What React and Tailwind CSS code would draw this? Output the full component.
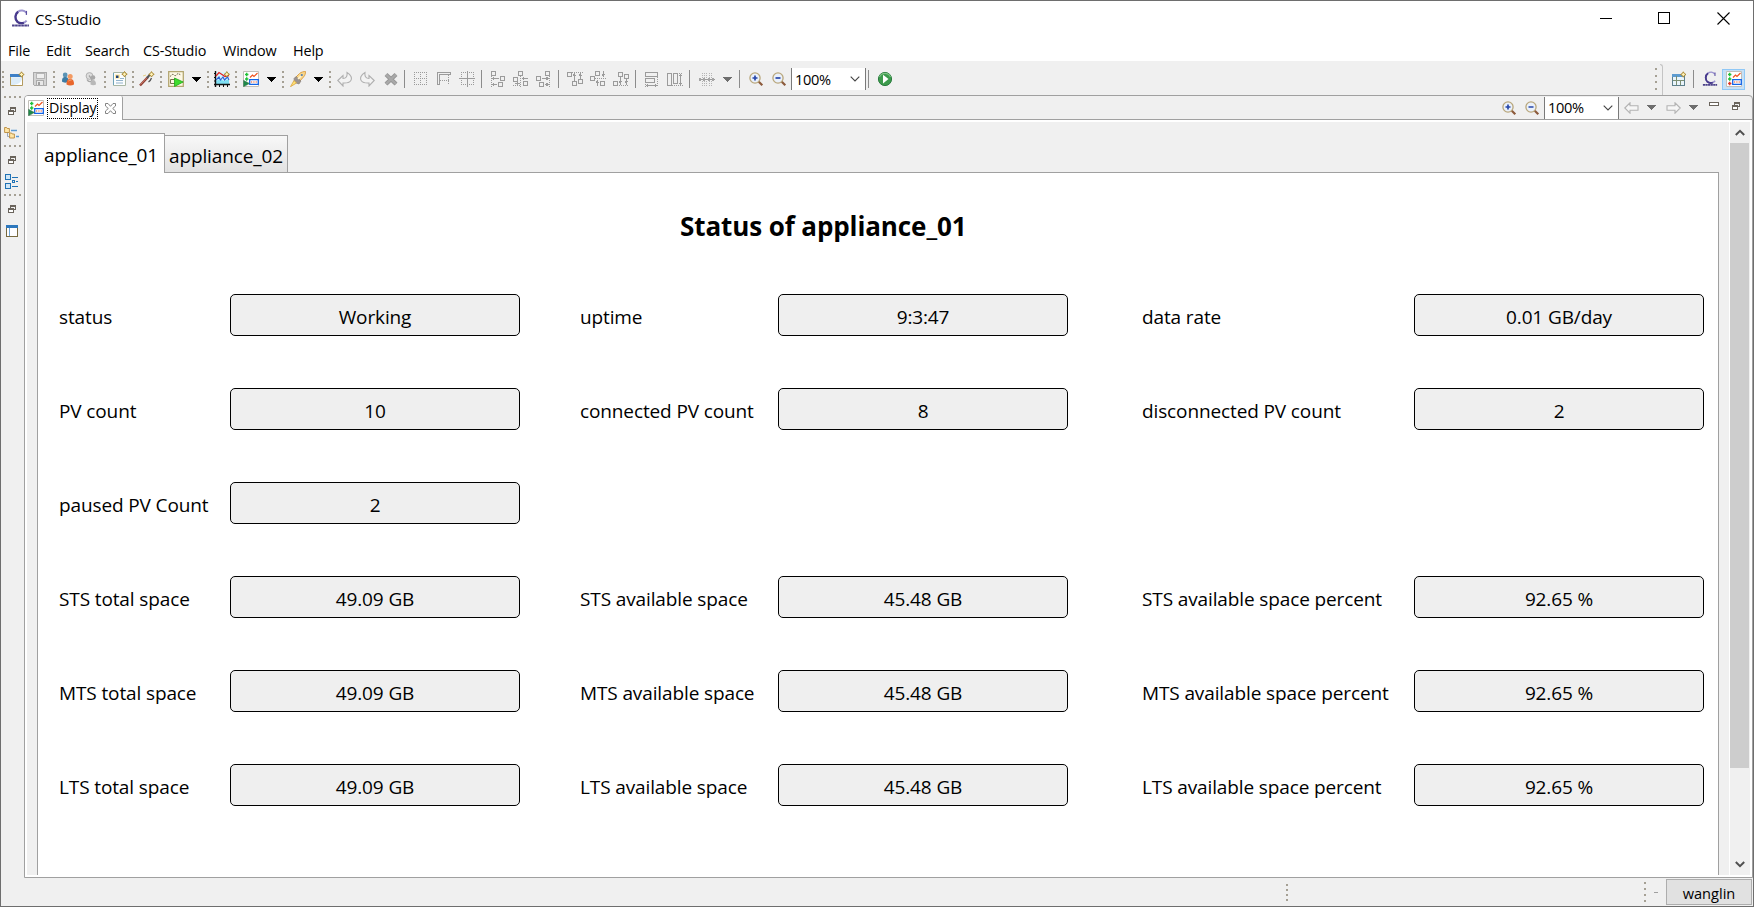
import React from "react";

/* ---------- small building blocks ---------- */

function Svg({ className = "", w = 16, h = 16, crisp = false, children }) {
  return (
    <svg
      className={`shrink-0 block ${className}`}
      width={w}
      height={h}
      viewBox={`0 0 ${w} ${h}`}
      fill="none"
      shapeRendering={crisp ? "crispEdges" : "auto"}
    >
      {children}
    </svg>
  );
}

function Grip({ className = "", h = 17 }) {
  return (
    <Svg className={className} w={2} h={h} crisp>
      {[0, 1, 2, 3].map((i) => (
        <rect key={i} x="0" y={Math.round((i * (h - 2)) / 3)} width="2" height="2" fill="#a5a094" />
      ))}
    </Svg>
  );
}

function HGrip({ className = "" }) {
  return (
    <Svg className={className} w={17} h={2} crisp>
      {[0, 5, 10, 15].map((x) => (
        <rect key={x} x={x} y="0" width="2" height="2" fill="#a5a094" />
      ))}
    </Svg>
  );
}

function Sep({ className = "" }) {
  return <div className={`h-[18px] w-px shrink-0 bg-[#8c8c8c] ${className}`} />;
}

function Caret({ className = "", color = "#000" }) {
  return (
    <Svg className={className} w={9} h={5} crisp>
      <path d="M0 0h9L5 5H4Z" fill={color} />
    </Svg>
  );
}

function Spark({ x, y }) {
  return (
    <path
      transform={`translate(${x} ${y})`}
      d="M3 0.3 4 2 5.7 3 4 4 3 5.7 2 4 0.3 3 2 2Z"
      fill="#fff3b8"
      stroke="#a98732"
      strokeWidth="1"
    />
  );
}

/* ---------- icons ---------- */

function CsLogo({ className = "", size = 18 }) {
  return (
    <svg className={`shrink-0 block ${className}`} width={size} height={size} viewBox="0 0 18 18" fill="none">
      <path d="M14.500 3.500C12.500 1 9 .8 6.500 2.600 3.200 4.800 3.200 10 6 12.300c2.600 2 6.600 1.500 8.800-1.300" stroke="#9b93cf" strokeWidth="1.700" />
      <path d="M6.800 2.600C3.600 4.800 3.500 9.700 6.200 12.200c1.600 1.300 4 1.500 6 .8" stroke="#473a8c" strokeWidth="2.100" />
      <path d="M14.600 1.800v3.800" stroke="#5a4da0" strokeWidth="1.200" />
      <path d="M1 15.600h16" stroke="#4b4189" strokeWidth="1.800" strokeDasharray="2.500 .4" />
    </svg>
  );
}

function NewWindow({ className }) {
  return (
    <Svg className={className}>
      <path d="M1.500 3.500h12v11h-12z" fill="#eaf4fb" stroke="#b39a5e" />
      <path d="M1 3h11v3H1z" fill="#3d7fc6" />
      <path d="M2 6.500h11V14H2z" fill="#dcecf8" />
      <path d="M5 14c5-1 7-3 8-6v6Z" fill="#fff" />
      <Spark x={9.500} y={0.500} />
    </Svg>
  );
}

function Save({ className }) {
  return (
    <Svg className={className} crisp>
      <path d="M1.500 1.500h13v13h-12l-1-1z" fill="#d4d4d4" stroke="#ababab" />
      <path d="M4 2h8v5H4z" fill="#efefef" stroke="#b5b5b5" strokeWidth="1" />
      <path d="M4.500 9.500h7v5h-7z" fill="#e8e8e8" stroke="#ababab" />
      <path d="M6 11h2v3H6z" fill="#9f9f9f" />
    </Svg>
  );
}

function People({ className }) {
  return (
    <Svg className={className}>
      <circle cx="5.200" cy="4" r="2.400" fill="#5b93b5" />
      <path d="M2 10.500C2 7 3 6 5.200 6S8.500 7 8.500 10.500c-1.500 1.500-5 1.500-6.500 0Z" fill="#3d7ca5" />
      <circle cx="10.200" cy="5.600" r="2.500" fill="#f39a62" />
      <path d="M6.500 13.500C6.500 9.500 7.500 8 10.200 8s3.800 1.500 3.800 5.500c-2 1.200-5.500 1.200-7.500 0Z" fill="#e8662c" />
      <path d="M8.500 10c.8-1 2-1 3-1" stroke="#f9b58a" />
    </Svg>
  );
}

function PeopleGray({ className }) {
  return (
    <Svg className={className}>
      <circle cx="7.500" cy="5" r="3.400" fill="#dedede" stroke="#b0b0b0" />
      <path d="M5 8.500c1 2 2 2.500 4 2l1-2-3-4" stroke="#a5a5a5" strokeWidth="1.300" />
      <circle cx="11" cy="6.500" r="2.300" fill="#a8a8a8" />
      <path d="M8.500 13.500c0-3 .5-4.500 2.500-4.500s3 1.500 3 4.500c-1.800 1-3.700 1-5.500 0Z" fill="#b8b8b8" />
    </Svg>
  );
}

function FormNew({ className }) {
  return (
    <Svg className={className}>
      <path d="M1.500 1.500h12v13h-12z" fill="#fbfdfe" stroke="#a9b7a4" />
      <path d="M1.500 2v12" stroke="#6da3b8" />
      <path d="M3 3.500h5v4H3z" fill="#ffe9a0" />
      <path d="M4 4.500h2.500v2.500H4z" fill="#23427a" />
      <path d="M8 7.500h4M4 9.500h7M4 12h7" stroke="#93b3cc" />
      <Spark x={9.500} y={0.200} />
    </Svg>
  );
}

function Wand({ className }) {
  return (
    <Svg className={className}>
      <path d="M1 14.500 9 6" stroke="#8d3f33" strokeWidth="2.400" />
      <path d="M1.500 13.500 8.500 6.200" stroke="#d98070" strokeWidth=".8" />
      <path d="M8 7l3-3.500" stroke="#555" strokeWidth="2" />
      <path d="M9.500 11c1.500-1 2.500-2.500 3-4" stroke="#555" strokeWidth="1.300" />
      <path d="M4 5l3-1" stroke="#e8d28a" />
      <Spark x={9.500} y={0.300} />
    </Svg>
  );
}

function PicturePlay({ className }) {
  return (
    <Svg className={className}>
      <path d="M.7.700h14.600v14.600H.7z" fill="#fdf8e4" stroke="#b3a671" strokeWidth="1.300" />
      <path d="M2 5.500 5 3l2 2 3-2.500 3 1.500" stroke="#6f6a50" strokeDasharray="1.500 .8" />
      <path d="M2.500 8.500h5v4h-5z" stroke="#77704e" />
      <path d="M6.500 7 15.200 11 6.500 15.500Z" fill="#3fdc2d" stroke="#1fa51b" strokeWidth=".8" />
    </Svg>
  );
}

function ChartNew({ className }) {
  return (
    <Svg className={className}>
      <path d="M2 1h13v12H2z" fill="#d6f5fc" />
      <path d="M2 10l4-2 4 2 5-2v5H2z" fill="#7fe0f5" />
      <path d="M1.500 0v16M0 13.500h16" stroke="#111" strokeWidth="1.400" />
      <path d="M0 2.500h2M0 6.500h2M0 10h2M5.500 14v2M9.500 14v2M13.500 14v2" stroke="#111" />
      <path d="M2 5l3-3.500 3 2 3 2 4-1" stroke="#e42222" strokeWidth="1.300" />
      <path d="M2 9l3-3 1.500 3L9 6l1.500 3 3-3L15 9" stroke="#2b62d8" strokeWidth="1.100" />
      <Spark x={9.800} y={0.300} />
    </Svg>
  );
}

function Display({ className = "", run = true }) {
  return (
    <Svg className={className}>
      <path d="M.5.500h15v15H.5z" fill="#fff" stroke="#c2bfb9" />
      <path d="M2 3.500h3.400M3.700 1.800v3.400M2 8h3.400M3.700 6.300v3.400" stroke="#22c13a" strokeWidth="1.400" />
      <path d="M7 6.500 9.500 4l1.500 1.500L14.500 2" stroke="#f0531f" strokeWidth="1.200" />
      <path d="M6.700 8.700h8.600v4.600H6.700z" fill="#fff" stroke="#1464e6" strokeWidth="1.300" />
      <path d="M8 11h1.200M10.300 11h1.200M12.600 11h1.200" stroke="#e84a1b" strokeWidth="1.200" />
      {run ? (
        <path d="M.5 9.300 6.500 12.500.5 15.800Z" fill="#1e8a4a" stroke="#4d7c5c" strokeWidth=".6" />
      ) : (
        <path d="M2 12.500h3.400M3.700 10.800v3.400" stroke="#e0372a" strokeWidth="1.400" />
      )}
    </Svg>
  );
}

function Rocket({ className }) {
  return (
    <Svg className={className}>
      <path d="M5 7 9.500 2.500C11 1 14 .5 15.500.500c0 2-.5 4-2 5.500L9 11Z" fill="#fbd88c" stroke="#d79a3c" strokeWidth=".9" />
      <path d="M4 7.500 6 5.500 11 10 9 13 4.500 11.500Z" fill="#9b9390" stroke="#7f7774" strokeWidth=".6" />
      <path d="M4 9.500 6.500 12 .5 15.700Z" fill="#ffe375" stroke="#dba33d" strokeWidth=".8" />
      <path d="M8 8l3-3" stroke="#fff3d0" strokeWidth="1.600" />
      <circle cx="11.800" cy="4" r="1.100" fill="#4e7fb5" />
    </Svg>
  );
}

function Undo({ className, flip = false }) {
  return (
    <Svg className={className}>
      <path
        transform={flip ? "matrix(-1 0 0 1 16 0)" : undefined}
        d="M.8 9.500 6 4.500v3c3 0 4.500-2 4-6 4 2 5.500 6 3.500 8.500-1.500 2-4 2.200-7.500 2V15Z"
        fill="#f3f3f3"
        stroke="#b0b0b0"
        strokeWidth="1.100"
      />
    </Svg>
  );
}

function Cross({ className }) {
  return (
    <Svg className={className}>
      <path d="M3 3.500 13 13M13 3.500 3 13" stroke="#979797" strokeWidth="4.200" />
      <path d="M3 3.500 13 13M13 3.500 3 13" stroke="#a9a9a9" strokeWidth="2.400" />
    </Svg>
  );
}

const G = "#9b9b9b";

function GridIcon({ className }) {
  return (
    <Svg className={className} crisp>
      <path
        d="M2 1.500h13M2 7.500h13M2 13.500h13M2.500 3v10M8.500 3v10M14.500 3v10"
        stroke={G}
        strokeDasharray="1 1"
      />
    </Svg>
  );
}

function RulerIcon({ className }) {
  return (
    <Svg className={className} crisp>
      <path d="M1.500 13.500v-12h13v2h-11v10z" stroke={G} />
      <path d="M12.500 4v10M4 9.500h9" stroke={G} strokeDasharray="1 1" />
    </Svg>
  );
}

function GeometryIcon({ className }) {
  return (
    <Svg className={className} crisp>
      <path d="M2 1.500h13M2 13.500h13M2.500 3v10M14.500 3v10" stroke={G} strokeDasharray="1 1" />
      <path d="M0 7.500h16M8.500 0v16" stroke={G} />
    </Svg>
  );
}

function Align({ className, boxes, dots, lines, heads }) {
  return (
    <Svg className={className} crisp>
      {boxes.map(([x, y]) => (
        <rect key={`${x}-${y}`} x={x + 0.5} y={y + 0.5} width="4" height="4" stroke={G} />
      ))}
      <path d={dots} stroke={G} strokeDasharray="1 1" />
      <path d={lines} stroke={G} />
      <path d={heads} fill={G} />
    </Svg>
  );
}

function MatchWidth({ className }) {
  return (
    <Svg className={className} crisp>
      <path d="M1.500 1.500h12v4h-12zM1.500 7.500h9v4h-9z" stroke={G} />
      <path d="M1.500 11v5M13.500 6v10" stroke={G} strokeDasharray="1 1" />
      <path d="M2 14.500h11" stroke={G} />
      <path d="M4 12.500v4l-2-2zM11 12.500v4l2-2z" fill={G} />
    </Svg>
  );
}

function MatchHeight({ className }) {
  return (
    <Svg className={className} crisp>
      <path d="M.5 2.500h4v12h-4zM6.500 2.500h4v10h-4z" stroke={G} />
      <path d="M10 2.500h6M5 14.500h11" stroke={G} strokeDasharray="1 1" />
      <path d="M13.500 3v11" stroke={G} />
      <path d="M11.500 5h4l-2-2zM11.500 12h4l-2 2z" fill={G} />
    </Svg>
  );
}

function Distribute({ className }) {
  return (
    <Svg className={className} crisp>
      <path d="M3.500 2v13M5.500 2v13M7.500 2v13M10.500 2v13M12.500 2v13" stroke="#b5b5b5" strokeDasharray="1 1" />
      <path d="M0 8.500h16" stroke={G} />
      <path d="M0 7h2v3H0zM4 7h2v3H4zM9 7h2v3H9zM13 7h2v3h-2z" fill="#a5a5a5" />
    </Svg>
  );
}

function Zoom({ className, plus = false }) {
  return (
    <Svg className={className}>
      <path d="M10.500 10.500 14.300 14.300" stroke="#8c5a3c" strokeWidth="2.200" />
      <circle cx="7" cy="7" r="5.100" fill="#eaf1fb" stroke="#b9a77c" strokeWidth="1.300" />
      <path d={plus ? "M4.500 7h5M7 4.500v5" : "M4.500 7h5"} stroke="#2646a8" strokeWidth="1.700" />
    </Svg>
  );
}

function RunIcon({ className }) {
  return (
    <Svg className={className}>
      <circle cx="8" cy="8" r="6.600" fill="#3c9a4c" stroke="#2b7c3f" />
      <path d="M2.500 6a6 6 0 0 1 11 0" stroke="#7cc283" strokeWidth="1.200" />
      <path d="M6 3.800 11.500 8 6 12.400Z" fill="#fff" />
    </Svg>
  );
}

function OpenPerspective({ className }) {
  return (
    <Svg className={className} crisp>
      <path d="M1.500 3.500h12v11h-12z" fill="#e9f4fb" stroke="#5d7f8c" />
      <path d="M1 3h11v2.500H1z" fill="#5c9bd0" />
      <path d="M5.500 5v9M2 9.500h11M9.500 10v4" stroke="#7d8f72" />
      <g shapeRendering="auto">
        <Spark x={9.300} y={0.500} />
      </g>
    </Svg>
  );
}

function NavArrow({ className, flip = false }) {
  return (
    <Svg className={className} w={15} h={12}>
      <path
        transform={flip ? "matrix(-1 0 0 1 15 0)" : undefined}
        d="M.8 6 6 .8v3h8v4.400H6v3Z"
        fill="#f6f6f6"
        stroke="#b3b3b3"
        strokeWidth="1.100"
      />
    </Svg>
  );
}

function Restore({ className }) {
  return (
    <Svg className={className} w={8} h={9} crisp>
      <path d="M2.500 4V.5h5v4h-2" stroke="#6a645c" />
      <path d="M2 1h6" stroke="#6a645c" strokeWidth="2" />
      <path d="M.5 4.500h5v3h-5z" fill="#fff" stroke="#6a645c" />
      <path d="M0 4h6" stroke="#6a645c" strokeWidth="2" />
    </Svg>
  );
}

function TreeIcon({ className }) {
  return (
    <Svg className={className} w={16} h={13}>
      <path d="M3.500 6v4.500H7" stroke="#9aa7b5" />
      <path d="M.6 1.500h2l.6 1H5.400v4H.6z" fill="#ffe6a6" stroke="#b98a3c" strokeWidth=".9" />
      <path d="M5.600 7h2l.6 1h2.200v4H5.600z" fill="#ffe6a6" stroke="#b98a3c" strokeWidth=".9" />
      <path d="M7 4.500h6M12 10.500h3" stroke="#5b9ad4" strokeWidth="1.400" />
    </Svg>
  );
}

function OutlineIcon({ className }) {
  return (
    <Svg className={className} w={14} h={16} crisp>
      <path d="M.5.500h5v5h-5zM.5 9.500h5v5h-5z" fill="#cfe6f7" stroke="#1f72b5" />
      <path d="M7 3.500h6M7 12.500h6M11 7.500h2" stroke="#1f72b5" />
      <path d="M7.500 6.500h2v2h-2z" stroke="#1f72b5" />
    </Svg>
  );
}

function PanelIcon({ className }) {
  return (
    <Svg className={className} w={12} h={12} crisp>
      <path d="M.5.500h11v11H.5z" fill="#fdfdff" stroke="#77693e" />
      <path d="M0 0h12v3H0z" fill="#2e78bd" />
      <path d="M3.500 3v8" stroke="#6da4d2" />
    </Svg>
  );
}

function Combo({ className = "" }) {
  return (
    <div className={`flex h-[22px] w-[75px] shrink-0 items-center justify-between border-x border-[#7a7a7a] bg-white pl-[3px] pr-[5px] ${className}`}>
      <span className="text-[14.600px] leading-none tracking-[-0.350px]">100%</span>
      <Svg w={10} h={6}>
        <path d="M.7.700 5 5 9.300.700" stroke="#444" strokeWidth="1.100" />
      </Svg>
    </div>
  );
}

/* ---------- window regions ---------- */

function TitleBar() {
  return (
    <div className="flex h-[35px] items-center bg-white pl-[10px]">
      <CsLogo size={19} />
      <span className="ml-[5px] grow pt-[2px] text-[15px] leading-none tracking-[-0.150px]">CS-Studio</span>
      <Svg className="mr-[45px]" w={13} h={13} crisp>
        <path d="M0 6.500h12" stroke="#000" />
      </Svg>
      <Svg className="mr-[46px]" w={13} h={13} crisp>
        <path d="M.5.500h11v11H.5z" stroke="#000" />
      </Svg>
      <Svg className="mr-[23px]" w={13} h={13}>
        <path d="M.5.500l12 12M12.500.500l-12 12" stroke="#000" strokeWidth="1.100" />
      </Svg>
    </div>
  );
}

function MenuBar() {
  return (
    <div className="flex h-[25px] items-center bg-white pl-[7px] pt-[5px] text-[14.400px] leading-none tracking-[-0.150px]">
      <span className="w-[38px]">File</span>
      <span className="w-[39px]">Edit</span>
      <span className="w-[58px]">Search</span>
      <span className="w-[80px]">CS-Studio</span>
      <span className="w-[70px]">Window</span>
      <span>Help</span>
    </div>
  );
}

function ToolBar() {
  return (
    <div className="flex h-[34px] items-center pl-px pt-[2px]">
      <Grip />
      <NewWindow className="ml-[5px]" />
      <Save className="ml-[7px]" />
      <Grip className="ml-[5px]" />
      <People className="ml-[5px]" />
      <PeopleGray className="ml-[6px]" />
      <Grip className="ml-[6px]" />
      <FormNew className="ml-[6px]" />
      <Grip className="ml-[4px]" />
      <Wand className="ml-[5px]" />
      <Grip className="ml-[5px]" />
      <PicturePlay className="ml-[6px]" />
      <Caret className="ml-[8px]" />
      <Grip className="ml-[6px]" />
      <ChartNew className="ml-[5px]" />
      <Grip className="ml-[5px]" />
      <Display className="ml-[6px]" />
      <Caret className="ml-[8px]" />
      <Grip className="ml-[6px]" />
      <Rocket className="ml-[6px]" />
      <Caret className="ml-[8px]" />
      <Grip className="ml-[6px]" />
      <Undo className="ml-[6px]" />
      <Undo className="ml-[6px]" flip />
      <Cross className="ml-[8px]" />
      <Sep className="ml-[5px]" />
      <GridIcon className="ml-[7px]" />
      <RulerIcon className="ml-[8px]" />
      <GeometryIcon className="ml-[7px]" />
      <Sep className="ml-[6px]" />
      <Align className="ml-[8px]" boxes={[[1, 0], [10, 5], [8, 11]]} dots="M1.500 5v11" lines="M2 7.500h7M2 13.500h5" heads="M4 5.500v4l-3-2zM4 11.500v4l-3-2z" />
      <Align className="ml-[7px]" boxes={[[5, 0], [0, 6], [10, 10]]} dots="M7.500 5v11M0 14.500h7" lines="M9 7.500h6M2 12.500h5" heads="M11 5.500v4l-2-2zM4 10.500v4l2-2z" />
      <Align className="ml-[7px]" boxes={[[9, 0], [0, 5], [3, 11]]} dots="M13.500 5v11" lines="M6 7.500h7M9 13.500h4" heads="M10 5.500v4l3-2zM10 11.500v4l3-2z" />
      <Sep className="ml-[6px]" />
      <Align className="ml-[8px]" boxes={[[0, 1], [5, 10], [11, 8]]} dots="M5 1.500h11" lines="M7.500 2v8M13.500 2v6" heads="M5.500 5h4l-2-3zM11.500 5h4l-2-3z" />
      <Align className="ml-[7px]" boxes={[[5, 0], [0, 5], [10, 10]]} dots="M5 7.500h11" lines="M13.500 0v6M7.500 9v6" heads="M11.500 3h4l-2 3zM5.500 12h4l-2-3z" />
      <Align className="ml-[7px]" boxes={[[5, 1], [11, 3], [0, 10]]} dots="M4 14.500h11" lines="M7.500 6v8M13.500 8v6" heads="M5.500 10h4l-2 3zM11.500 10h4l-2 3z" />
      <Sep className="ml-[6px]" />
      <MatchWidth className="ml-[8px]" />
      <MatchHeight className="ml-[7px]" />
      <Sep className="ml-[6px]" />
      <Distribute className="ml-[9px]" />
      <Caret className="ml-[8px]" color="#6e6e6e" />
      <Sep className="ml-[7px]" />
      <Zoom className="ml-[8px]" plus />
      <Zoom className="ml-[7px]" />
      <Combo className="ml-[4px]" />
      <Sep className="ml-[2px]" />
      <RunIcon className="ml-[8px]" />
      <div className="grow" />
      <Grip h={22} />
      <div className="ml-[3px] h-[31px] w-[3px] rounded-tr-[3px] border-r border-t border-[#c4c4c4]" />
      <OpenPerspective className="ml-[8px]" />
      <Sep className="ml-[6px]" />
      <CsLogo className="ml-[8px]" size={16} />
      <div className="ml-[4px] mr-[8px] flex h-[21px] w-[23px] items-center justify-center border border-[#90c8f6] bg-[#c5e0f7]">
        <Display run={false} />
      </div>
    </div>
  );
}

function SideStrip() {
  return (
    <div className="flex w-[23px] shrink-0 flex-col pl-[3px] pt-px">
      <HGrip />
      <Restore className="ml-[4px] mt-[9px]" />
      <TreeIcon className="mt-[10px]" />
      <HGrip className="mt-[6px]" />
      <Restore className="ml-[4px] mt-[9px]" />
      <OutlineIcon className="ml-px mt-[9px]" />
      <HGrip className="mt-[4px]" />
      <Restore className="ml-[4px] mt-[9px]" />
      <PanelIcon className="ml-[2px] mt-[11px]" />
    </div>
  );
}

function EditorTabs() {
  return (
    <div className="flex h-[24px] shrink-0">
      <div className="flex w-[98px] items-center rounded-tr-[2px] border-r border-[#a0a0a0] bg-white pl-[3px]">
        <Display />
        <span className="ml-[3px] flex h-[21px] w-[51px] shrink-0 items-center border border-dotted border-black pl-[1px] pt-px text-[14.300px] leading-none tracking-[-0.100px]">
          Display
        </span>
        <Svg className="ml-[7px]" w={11} h={11}>
          <path d="M.5.500H3L5.500 3.300 8 .5h2.500V3L7.700 5.500l2.800 2.500v2.500H8L5.500 7.700 3 10.500H.5V8l2.800-2.500L.5 3Z" stroke="#777" strokeWidth=".9" />
        </Svg>
      </div>
      <div className="flex grow items-center justify-end border-b border-[#a0a0a0]">
        <Zoom plus />
        <Zoom className="ml-[7px]" />
        <Combo className="ml-[4px]" />
        <NavArrow className="ml-[5px]" />
        <Caret className="ml-[8px]" color="#6e6e6e" />
        <NavArrow className="ml-[10px]" flip />
        <Caret className="ml-[8px]" color="#6e6e6e" />
        <Svg className="mb-[7px] ml-[11px]" w={10} h={4} crisp>
          <path d="M.5.500h9v3h-9z" fill="#fff" stroke="#6a645c" />
        </Svg>
        <Restore className="mb-[3px] ml-[13px] mr-[12px]" />
      </div>
    </div>
  );
}

const rows = [
  [["status", "Working"], ["uptime", "9:3:47"], ["data rate", "0.01 GB/day"]],
  [["PV count", "10"], ["connected PV count", "8"], ["disconnected PV count", "2"]],
  [["paused PV Count", "2"], null, null],
  [["STS total space", "49.09 GB"], ["STS available space", "45.48 GB"], ["STS available space percent", "92.65 %"]],
  [["MTS total space", "49.09 GB"], ["MTS available space", "45.48 GB"], ["MTS available space percent", "92.65 %"]],
  [["LTS total space", "49.09 GB"], ["LTS available space", "45.48 GB"], ["LTS available space percent", "92.65 %"]],
];

function StatusGrid() {
  return (
    <div className="grid grid-cols-[171px_350px_198px_364px_272px_290px] gap-y-[52px] pl-[21px] text-[19px] leading-none tracking-[-0.120px]">
      {rows.flatMap((row, r) =>
        row.flatMap((cell, c) =>
          cell
            ? [
                <div key={`l${r}${c}`} className="flex h-[42px] items-center whitespace-nowrap pt-[4px]">
                  {cell[0]}
                </div>,
                <div key={`v${r}${c}`} className="flex h-[42px] w-[290px] items-center justify-center rounded-[5px] border border-black bg-[#efefef] pt-[4px]">
                  {cell[1]}
                </div>,
              ]
            : [<div key={`l${r}${c}`} />, <div key={`v${r}${c}`} />]
        )
      )}
    </div>
  );
}

function DisplayArea() {
  return (
    <div className="flex min-h-0 grow flex-col bg-[#f0f0f0] pl-[10px] pr-[10px] pt-[11px]">
      <div className="flex h-[39px] shrink-0 items-end text-[19px] leading-none tracking-[-0.120px]">
        <div className="z-10 -mb-px flex h-[40px] w-[128px] items-center justify-center border border-b-0 border-[#a0a0a0] bg-white pt-[3px]">
          appliance_01
        </div>
        <div className="flex h-[37px] w-[123px] items-center justify-center border border-b-0 border-l-0 border-[#a0a0a0] bg-linear-to-b from-[#f8f8f8] to-[#e2e2e2] pt-[4px]">
          appliance_02
        </div>
      </div>
      <div className="min-h-0 grow overflow-hidden border border-b-0 border-[#a0a0a0] bg-white">
        <h1 className="ml-[642px] h-[121px] whitespace-nowrap pt-[37px] text-[26px] font-bold leading-[32px] tracking-[-0.100px]">
          Status of appliance_01
        </h1>
        <StatusGrid />
      </div>
    </div>
  );
}

function ScrollBar() {
  return (
    <div className="ml-px flex w-[20px] shrink-0 flex-col items-center bg-[#f0f0f0]">
      <div className="flex h-[21px] items-center">
        <Svg w={10} h={7}>
          <path d="M.8 6 5 1.800 9.200 6" stroke="#505050" strokeWidth="2" />
        </Svg>
      </div>
      <div className="h-[625px] w-[19px] self-start bg-[#cdcdcd]" />
      <div className="grow" />
      <div className="flex h-[21px] items-center">
        <Svg w={10} h={7}>
          <path d="M.8 1 5 5.200 9.200 1" stroke="#505050" strokeWidth="2" />
        </Svg>
      </div>
    </div>
  );
}

function StatusBar() {
  return (
    <div className="flex h-[28px] shrink-0 items-center justify-end pr-px">
      <Grip h={17} />
      <Grip className="ml-[356px]" h={20} />
      <div className="ml-[8px] mr-[8px] h-px w-[4px] bg-[#a0a0a0]" />
      <div className="flex h-[26px] w-[86px] items-center justify-center border border-[#adadad] bg-[#e1e1e1] pt-[2px] text-[14.600px] leading-none">
        wanglin
      </div>
    </div>
  );
}

export default function App() {
  return (
    <div className="flex h-[907px] w-[1754px] flex-col overflow-hidden border border-[#6e6e6e] bg-[#f0f0f0] font-['Open_Sans','Noto_Sans',sans-serif] text-black">
      <TitleBar />
      <MenuBar />
      <ToolBar />
      <div className="flex min-h-0 grow">
        <SideStrip />
        <div className="flex min-w-0 grow flex-col overflow-hidden rounded-t-[4px] border border-[#a0a0a0]">
          <EditorTabs />
          <div className="flex min-h-0 grow border-2 border-white bg-white">
            <DisplayArea />
            <ScrollBar />
          </div>
        </div>
      </div>
      <StatusBar />
    </div>
  );
}
